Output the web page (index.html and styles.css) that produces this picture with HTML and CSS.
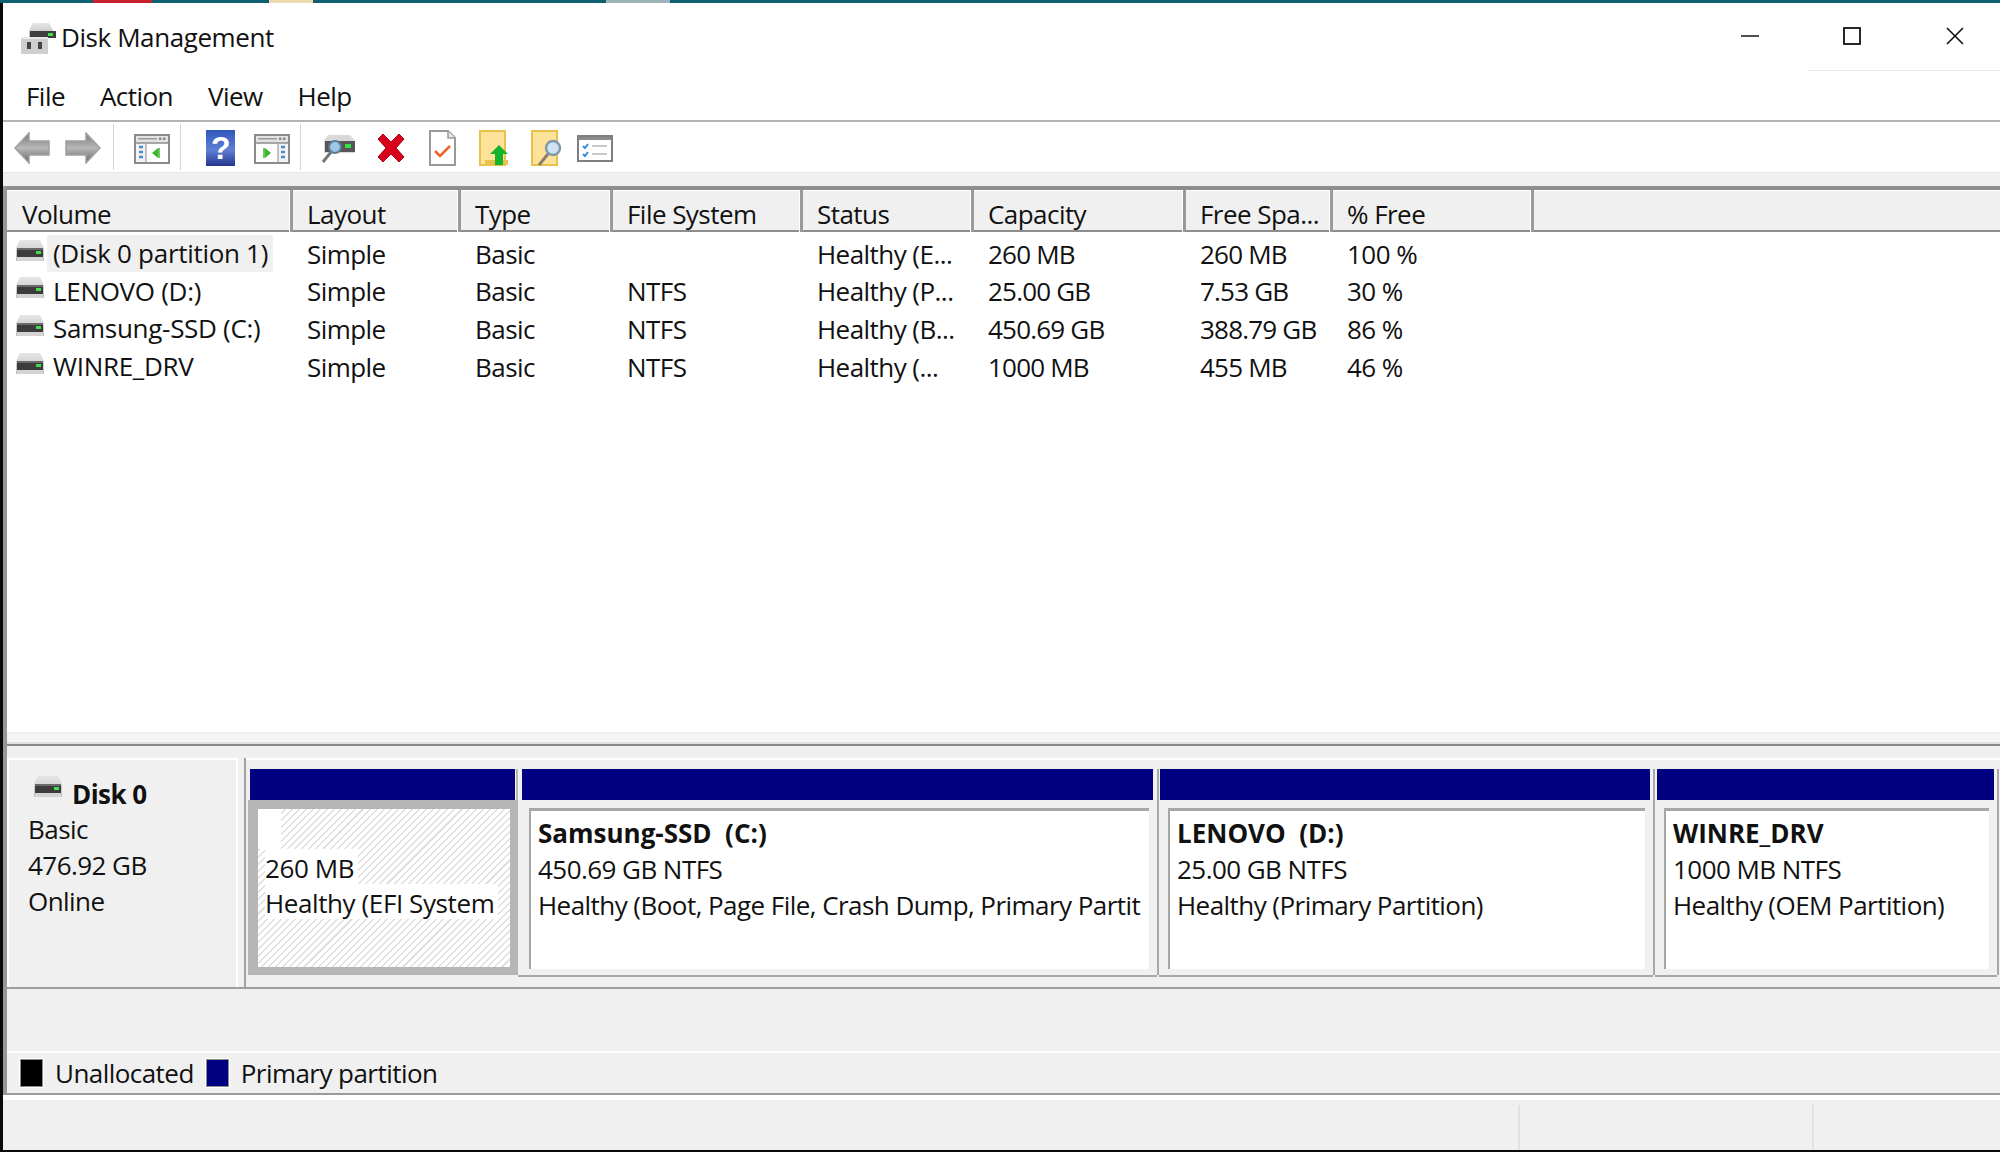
FILE: index.html
```html
<!DOCTYPE html>
<html lang="en">
<head>
<meta charset="utf-8">
<title>Disk Management</title>
<link rel="stylesheet" href="styles.css">
</head>
<body>
<svg class="defs" width="0" height="0" aria-hidden="true">
  <defs>
    <linearGradient id="arrowFill" x1="0" y1="0" x2="0" y2="1"><stop offset="0" stop-color="#777"/><stop offset=".5" stop-color="#b8b8b8"/><stop offset="1" stop-color="#666"/></linearGradient>
    <linearGradient id="helpFill" x1="0" y1="0" x2="0" y2="1"><stop offset="0" stop-color="#2f56b8"/><stop offset=".55" stop-color="#5f7fd6"/><stop offset="1" stop-color="#24378c"/></linearGradient>
    <linearGradient id="driveTop" x1="0" y1="0" x2="0" y2="1"><stop offset="0" stop-color="#e6e6e6"/><stop offset="1" stop-color="#bdbdbd"/></linearGradient>
    <symbol id="drive" viewBox="0 0 30 24">
      <path d="M5 1h20l4 8v13H1V9z" fill="url(#driveTop)"/>
      <rect x="2" y="9" width="26" height="9" fill="#3c3c3c"/>
      <rect x="2" y="9" width="26" height="2" fill="#6a6a6a"/>
      <rect x="2" y="18" width="26" height="4" fill="#d4d4d4"/>
      <rect x="21" y="12" width="5" height="3" fill="#3fe04a"/>
    </symbol>
    <symbol id="pane" viewBox="0 0 36 30">
      <rect x="1" y="1" width="34" height="28" fill="#fff" stroke="#8c8c8c" stroke-width="2"/>
      <rect x="2" y="2" width="32" height="7" fill="#e3e3e3"/>
      <path d="M2 9h32" stroke="#8c8c8c" stroke-width="1.5"/>
      <rect x="4" y="4" width="19" height="1.5" fill="#9a9a9a"/>
      <rect x="25" y="3.5" width="2.5" height="2.5" fill="#8a8a8a"/>
      <rect x="29" y="3.5" width="2.5" height="2.5" fill="#8a8a8a"/>
    </symbol>
  </defs>
</svg>

<div class="desktop-strip">
  <span class="spot spot-red"></span><span class="spot spot-cream"></span><span class="spot spot-gray"></span>
</div>

<div class="window">
  <header class="titlebar">
    <svg class="app-icon" viewBox="0 0 36 32">
      <path d="M12 1h16l5 9v6H8V8z" fill="url(#driveTop)"/>
      <rect x="9" y="9" width="26" height="7" fill="#3f3f3f"/>
      <rect x="27" y="11" width="5" height="3" fill="#3fe04a"/>
      <rect x="0" y="15" width="27" height="17" fill="#cfcfcf"/>
      <rect x="0" y="15" width="27" height="2" fill="#e9e9e9"/>
      <rect x="6" y="20" width="4" height="7" fill="#444"/>
      <rect x="17" y="20" width="4" height="7" fill="#444"/>
    </svg>
    <h1 class="app-title">Disk Management</h1>
    <div class="win-controls">
      <svg class="win-btn" viewBox="0 0 18 18"><path d="M0 9h18" stroke="#222" stroke-width="1.6"/></svg>
      <svg class="win-btn" viewBox="0 0 18 18"><rect x="1" y="1" width="16" height="16" fill="none" stroke="#111" stroke-width="1.8"/></svg>
      <svg class="win-btn" viewBox="0 0 18 18"><path d="M1 1l16 16M17 1L1 17" stroke="#111" stroke-width="1.6"/></svg>
    </div>
    <div class="title-rule"></div>
  </header>

  <nav class="menubar">
    <span class="menu-item">File</span>
    <span class="menu-item">Action</span>
    <span class="menu-item">View</span>
    <span class="menu-item">Help</span>
  </nav>

  <div class="toolbar">
    <svg class="tool tool-arrow" viewBox="0 0 36 32"><path d="M1 16L15 1v8h20v14H15v8z" fill="url(#arrowFill)" stroke="#a0a0a0" stroke-width="1.5"/></svg>
    <svg class="tool tool-arrow next" viewBox="0 0 36 32"><path d="M35 16L21 1v8H1v14h20v8z" fill="url(#arrowFill)" stroke="#a0a0a0" stroke-width="1.5"/></svg>
    <span class="tool-sep sep-a"></span>
    <svg class="tool tool-pane" viewBox="0 0 36 30"><use href="#pane"/><rect x="2" y="10" width="10" height="18" fill="#f2f2f2"/><path d="M12 10v18" stroke="#8c8c8c"/><path d="M5 13h4M5 18h4M5 23h4" stroke="#4a8ad4" stroke-width="2.4"/><path d="M24 14l-6 5 6 5z" fill="#3cb52e"/><path d="M25 14v10" stroke="#3cb52e" stroke-width="1.5"/></svg>
    <span class="tool-sep sep-b"></span>
    <svg class="tool tool-help" viewBox="0 0 29 36"><rect width="29" height="36" fill="url(#helpFill)"/><text class="help-mark" x="14.5" y="29" text-anchor="middle">?</text></svg>
    <svg class="tool tool-pane gap-pane" viewBox="0 0 36 30"><use href="#pane"/><rect x="24" y="10" width="10" height="18" fill="#f2f2f2"/><path d="M24 10v18" stroke="#8c8c8c"/><path d="M27 13h4M27 18h4M27 23h4" stroke="#4a8ad4" stroke-width="2.4"/><path d="M11 14l6 5-6 5z" fill="#3cb52e"/><path d="M10 14v10" stroke="#3cb52e" stroke-width="1.5"/></svg>
    <span class="tool-sep sep-c"></span>
    <svg class="tool tool-find" viewBox="0 0 34 30"><path d="M6 1h22l5 6v12H2V7z" fill="#d9d9d9"/><rect x="3" y="7" width="30" height="11" fill="#565656"/><rect x="23" y="10" width="6" height="4" fill="#36e048"/><circle cx="13" cy="13" r="6" fill="#9cc7e6" stroke="#5d7b90" stroke-width="2"/><path d="M9 18L1 28" stroke="#777" stroke-width="3"/></svg>
    <svg class="tool tool-x" viewBox="0 0 32 32"><path d="M3 7l5-5 8 8 8-8 5 5-8 9 8 9-5 5-8-8-8 8-5-5 8-9z" fill="#d9001b" stroke="#b30016"/></svg>
    <svg class="tool tool-doc" viewBox="0 0 27 36"><path d="M1 1h18l7 7v27H1z" fill="#fff" stroke="#9a9a9a" stroke-width="2"/><path d="M19 1v7h7" fill="#e8e8e8" stroke="#9a9a9a" stroke-width="1.5"/><path d="M6 21l5 5 10-10" fill="none" stroke="#f0642c" stroke-width="2.6"/></svg>
    <svg class="tool tool-folder" viewBox="0 0 30 36"><rect x="1" y="1" width="25" height="34" fill="#fde29a" stroke="#e8c24e" stroke-width="2"/><rect x="6" y="30" width="23" height="5" fill="#e8c24e"/><path d="M20 15l9 9h-5v11h-8V24h-5z" fill="#12b52a"/></svg>
    <svg class="tool tool-folder" viewBox="0 0 31 36"><rect x="1" y="1" width="25" height="34" fill="#fde29a" stroke="#e8c24e" stroke-width="2"/><circle cx="22" cy="18" r="7" fill="#cfe3f2" stroke="#7e99ab" stroke-width="2.4"/><path d="M17 24l-9 11" stroke="#8a7f6a" stroke-width="3"/></svg>
    <svg class="tool tool-list" viewBox="0 0 36 27"><rect x="1" y="1" width="34" height="25" fill="#fff" stroke="#7f7f7f" stroke-width="2"/><rect x="2" y="2" width="32" height="3" fill="#8c8c8c"/><path d="M6 11l2 2 3-4M6 19l2 2 3-4" fill="none" stroke="#2f8fe0" stroke-width="2"/><path d="M15 11h15M15 19h15" stroke="#c9c9c9" stroke-width="2"/></svg>
  </div>
  <div class="toolbar-foot"></div>

  <main class="workspace">
    <section class="volumes">
      <div class="vol-head vol-grid">
        <span class="col">Volume</span><span class="col">Layout</span><span class="col">Type</span><span class="col">File System</span><span class="col">Status</span><span class="col">Capacity</span><span class="col">Free Spa...</span><span class="col">% Free</span><span class="col"></span>
      </div>
      <div class="vol-body">
        <div class="vol-row vol-grid">
          <span class="cell name"><svg class="drive-icon"><use href="#drive"/></svg><span class="name-text selected">(Disk 0 partition 1)</span></span>
          <span class="cell">Simple</span><span class="cell">Basic</span><span class="cell"></span><span class="cell">Healthy (E...</span><span class="cell">260 MB</span><span class="cell">260 MB</span><span class="cell">100 %</span>
        </div>
        <div class="vol-row vol-grid">
          <span class="cell name"><svg class="drive-icon"><use href="#drive"/></svg><span class="name-text">LENOVO (D:)</span></span>
          <span class="cell">Simple</span><span class="cell">Basic</span><span class="cell">NTFS</span><span class="cell">Healthy (P...</span><span class="cell">25.00 GB</span><span class="cell">7.53 GB</span><span class="cell">30 %</span>
        </div>
        <div class="vol-row vol-grid">
          <span class="cell name"><svg class="drive-icon"><use href="#drive"/></svg><span class="name-text">Samsung-SSD (C:)</span></span>
          <span class="cell">Simple</span><span class="cell">Basic</span><span class="cell">NTFS</span><span class="cell">Healthy (B...</span><span class="cell">450.69 GB</span><span class="cell">388.79 GB</span><span class="cell">86 %</span>
        </div>
        <div class="vol-row vol-grid">
          <span class="cell name"><svg class="drive-icon"><use href="#drive"/></svg><span class="name-text">WINRE_DRV</span></span>
          <span class="cell">Simple</span><span class="cell">Basic</span><span class="cell">NTFS</span><span class="cell">Healthy (...</span><span class="cell">1000 MB</span><span class="cell">455 MB</span><span class="cell">46 %</span>
        </div>
      </div>
      <div class="vol-foot"></div>
    </section>

    <section class="disks">
      <div class="disk-row">
        <div class="disk-label">
          <div class="disk-name"><svg class="drive-icon small"><use href="#drive"/></svg><strong>Disk 0</strong></div>
          <div class="line">Basic</div>
          <div class="line">476.92 GB</div>
          <div class="line">Online</div>
        </div>
        <div class="disk-split"></div>
        <div class="partitions">
          <div class="part part-efi">
            <div class="part-bar"></div>
            <div class="part-frame">
              <div class="part-box hatch">
                <div class="efi-blank"></div>
                <div class="efi-line">260 MB</div>
                <div class="efi-line">Healthy (EFI System</div>
              </div>
            </div>
          </div>
          <div class="part part-c">
            <div class="part-bar"></div>
            <div class="part-frame">
              <div class="part-box">
                <div class="part-title">Samsung-SSD&nbsp; (C:)</div>
                <div class="line">450.69 GB NTFS</div>
                <div class="line clip">Healthy (Boot, Page File, Crash Dump, Primary Partition)</div>
              </div>
            </div>
          </div>
          <div class="part part-d">
            <div class="part-bar"></div>
            <div class="part-frame">
              <div class="part-box">
                <div class="part-title">LENOVO&nbsp; (D:)</div>
                <div class="line">25.00 GB NTFS</div>
                <div class="line clip">Healthy (Primary Partition)</div>
              </div>
            </div>
          </div>
          <div class="part part-w">
            <div class="part-bar"></div>
            <div class="part-frame">
              <div class="part-box">
                <div class="part-title">WINRE_DRV</div>
                <div class="line">1000 MB NTFS</div>
                <div class="line clip">Healthy (OEM Partition)</div>
              </div>
            </div>
          </div>
        </div>
      </div>
    </section>

    <footer class="legend">
      <span class="swatch swatch-black"></span><span class="legend-text">Unallocated</span>
      <span class="swatch swatch-blue"></span><span class="legend-text">Primary partition</span>
    </footer>
  </main>

  <div class="statusbar">
    <span class="status-cell grow"></span>
    <span class="status-cell mid"></span>
    <span class="status-cell end"></span>
  </div>
</div>
</body>
</html>
```
FILE: styles.css
```css
* { box-sizing: border-box; }
html, body { margin: 0; padding: 0; }
body {
  width: 2000px;
  height: 1152px;
  overflow: hidden;
  background: #0a0a0a;
  display: flex;
  flex-direction: column;
  font-family: "Open Sans", "Noto Sans", "Liberation Sans", sans-serif;
  font-size: 26px;
  letter-spacing: -0.55px;
  color: #111;
}
.defs { position: absolute; }

.desktop-strip { height: 3px; background: #0e5f70; display: flex; flex: none; }
.spot { display: block; height: 3px; }
.spot-red { width: 59px; margin-left: 93px; background: #c8202c; }
.spot-cream { width: 44px; margin-left: 117px; background: #ecdcae; }
.spot-gray { width: 64px; margin-left: 293px; background: #9db4b8; }

.window {
  flex: 1;
  margin-left: 3px;
  margin-bottom: 2px;
  background: #fff;
  display: flex;
  flex-direction: column;
  min-height: 0;
}

.titlebar { height: 68px; flex: none; display: flex; align-items: center; padding-left: 18px; position: relative; }
.app-icon { width: 36px; height: 32px; margin-top: 2px; flex: none; }
.app-title { margin: 0 0 0 4px; font-size: 26px; font-weight: 400; line-height: 34px; letter-spacing: -0.42px; }
.win-controls { margin-left: auto; display: flex; align-self: flex-start; padding-top: 24px; padding-right: 36px; }
.win-btn { width: 18px; height: 18px; display: block; }
.win-btn + .win-btn { margin-left: 84px; }
.win-btn:last-child { margin-left: 85px; }
.title-rule { position: absolute; right: 0; bottom: 0; width: 192px; height: 1px; background: #e8e8e8; }

.menubar { flex: none; display: flex; align-items: center; padding-left: 23px; gap: 35px; border-bottom: 2px solid #b4b4b4; height: 51px; }

.toolbar { height: 50px; flex: none; display: flex; align-items: center; padding-left: 11px; padding-top: 2px; }
.tool { display: block; flex: none; }
.tool-arrow { width: 36px; height: 32px; }
.tool-arrow.next { margin-left: 15px; }
.tool-sep { width: 1px; height: 46px; background: #d4d4d4; flex: none; margin-top: -2px; }
.sep-a { margin-left: 12px; }
.tool-pane { width: 36px; height: 30px; margin-top: 2px; }
.toolbar > .tool-sep.sep-a + .tool-pane { margin-left: 20px; }
.sep-b { margin-left: 10px; }
.tool-help { width: 29px; height: 36px; margin-left: 25px; }
.help-mark { font-family: "Liberation Sans", sans-serif; font-size: 32px; font-weight: 700; fill: #fff; }
.gap-pane { margin-left: 19px; }
.sep-c { margin-left: 10px; }
.tool-find { width: 34px; height: 30px; margin-left: 21px; margin-top: 2px; }
.tool-x { width: 32px; height: 32px; margin-left: 19px; }
.tool-doc { width: 27px; height: 36px; margin-left: 22px; }
.tool-folder { width: 30px; height: 36px; margin-left: 23px; }
.tool-folder + .tool-folder { margin-left: 22px; width: 31px; }
.tool-list { width: 36px; height: 27px; margin-left: 15px; }

.toolbar-foot { height: 14px; flex: none; background: #f0f0f0; border-top: 1px solid #e6e6e6; }

.workspace { flex: none; height: 909px; display: flex; flex-direction: column; border-left: 4px solid #979797; border-bottom: 2px solid #9a9a9a; }

.volumes { flex: none; height: 558px; display: flex; flex-direction: column; background: #fff; }
.vol-grid { display: grid; grid-template-columns: 286px 168px 152px 190px 171px 212px 147px 201px 1fr; }
.vol-head { height: 46px; flex: none; background: #f0f0f0; border-top: 4px solid #8d8d8d; border-bottom: 2px solid #8d8d8d; box-shadow: inset 0 1px 0 #fff; }
.col { display: flex; align-items: center; padding-left: 14px; padding-top: 6px; border-right: 3px solid #9a9a9a; box-shadow: inset -1px 0 0 #fff; }
.col:first-child { padding-left: 15px; }
.col:last-child { border-right: 0; box-shadow: none; }
.vol-body { flex: 1; padding-top: 3px; }
.vol-row { height: 37.6px; align-items: center; }
.cell { padding-left: 14px; white-space: nowrap; }
.cell:nth-child(6), .cell:nth-child(7) { letter-spacing: -0.8px; }
.cell.name { display: flex; align-items: center; padding-left: 8px; }
.drive-icon { width: 30px; height: 24px; flex: none; margin-top: -6px; }
.name-text { line-height: 37px; margin-left: 2px; padding: 0 5px 0 6px; letter-spacing: -0.3px; }
.selected { background: #f0f0f0; }
.vol-foot { flex: none; background: #f4f4f4; border-top: 2px solid #eeeeee; border-bottom: 2px solid #e0e0e0; height: 12px; }

.disks { flex: none; height: 307px; background: #f0f0f0; border-top: 2px solid #888; padding-top: 12px; }
.disk-row { display: flex; height: 231px; border-bottom: 2px solid #9e9e9e; }
.disk-label { width: 231px; height: 100%; border-top: 2px solid #fff; border-left: 2px solid #fff; border-right: 2px solid #fff; padding: 16px 0 0 19px; flex: none; }
.disk-name { display: flex; align-items: center; height: 35px; }
.drive-icon.small { margin-left: 5px; margin-right: 9px; margin-top: -14px; }
.disk-name strong { font-weight: 700; font-size: 26px; }
.line { height: 36px; line-height: 36px; white-space: nowrap; }
.clip { overflow: hidden; }
.disk-split { width: 8px; flex: none; border-right: 2px solid #a0a0a0; border-left: 4px solid #f0f0f0; }
.partitions { flex: 1; display: flex; border-top: 2px solid #fff; padding-top: 9px; min-width: 0; }
.part { display: flex; flex-direction: column; border-right: 2px solid #a8a8a8; height: 206px; flex: none; }
.part-efi { width: 272px; padding-left: 2px; border-right-color: #b6b6b6; }
.part-c { width: 641px; }
.part-d { width: 496px; }
.part-w { width: 344px; }
.part-bar { height: 31px; flex: none; margin: 0 3px 0 2px; background: #000080; }
.part-c .part-bar { margin: 0 4px 0 4px; }
.part-d .part-bar { margin-left: 1px; }
.part-frame { flex: 1; padding: 8px 8px 6px 9px; background: #f0f0f0; border-bottom: 2px solid #a8a8a8; }
.part-c .part-frame { padding-left: 11px; }
.part-box { height: 161px; border-top: 3px solid #a6a6a6; border-left: 2px solid #a6a6a6; background: #fff; padding: 4px 8px 0 7px; }
.part-title { height: 36px; line-height: 36px; font-weight: 700; white-space: nowrap; letter-spacing: 0; }

.part-efi .part-frame { background: #b6b6b6; padding: 9px 6px 8px 10px; border-bottom: 0; }
.part-efi .part-bar { margin: 0 1px 0 2px; }
.hatch {
  border: 0;
  height: 158px;
  padding: 0 0 0 7px;
  background: repeating-linear-gradient(135deg, #fff 0, #fff 3.5px, #e0e0e0 3.5px, #e0e0e0 5px);
}
.efi-blank { height: 40px; background: #fff; margin-left: -7px; width: 23px; }
.efi-line { width: max-content; height: 35px; line-height: 39px; background: #fff; padding-right: 4px; white-space: nowrap; letter-spacing: -0.4px; }

.legend { flex: none; height: 42px; display: flex; align-items: center; background: #f0f0f0; border-top: 2px solid #fff; padding-left: 13px; }
.swatch { width: 23px; height: 28px; flex: none; border: 1px solid #8c8c8c; box-shadow: 0 0 0 1px #fff; }
.swatch-black { background: #000; }
.swatch-blue { background: #000080; margin-left: 12px; }
.legend-text { margin-left: 12px; }

.statusbar { flex: 1; display: flex; background: #f0f0f0; border-top: 2px solid #fff; margin-top: 3px; padding-top: 5px; }
.status-cell { display: block; border-right: 2px solid #e2e2e2; }
.grow { width: 1517px; }
.mid { width: 294px; }
.end { flex: 1; border-right: 0; }
```
